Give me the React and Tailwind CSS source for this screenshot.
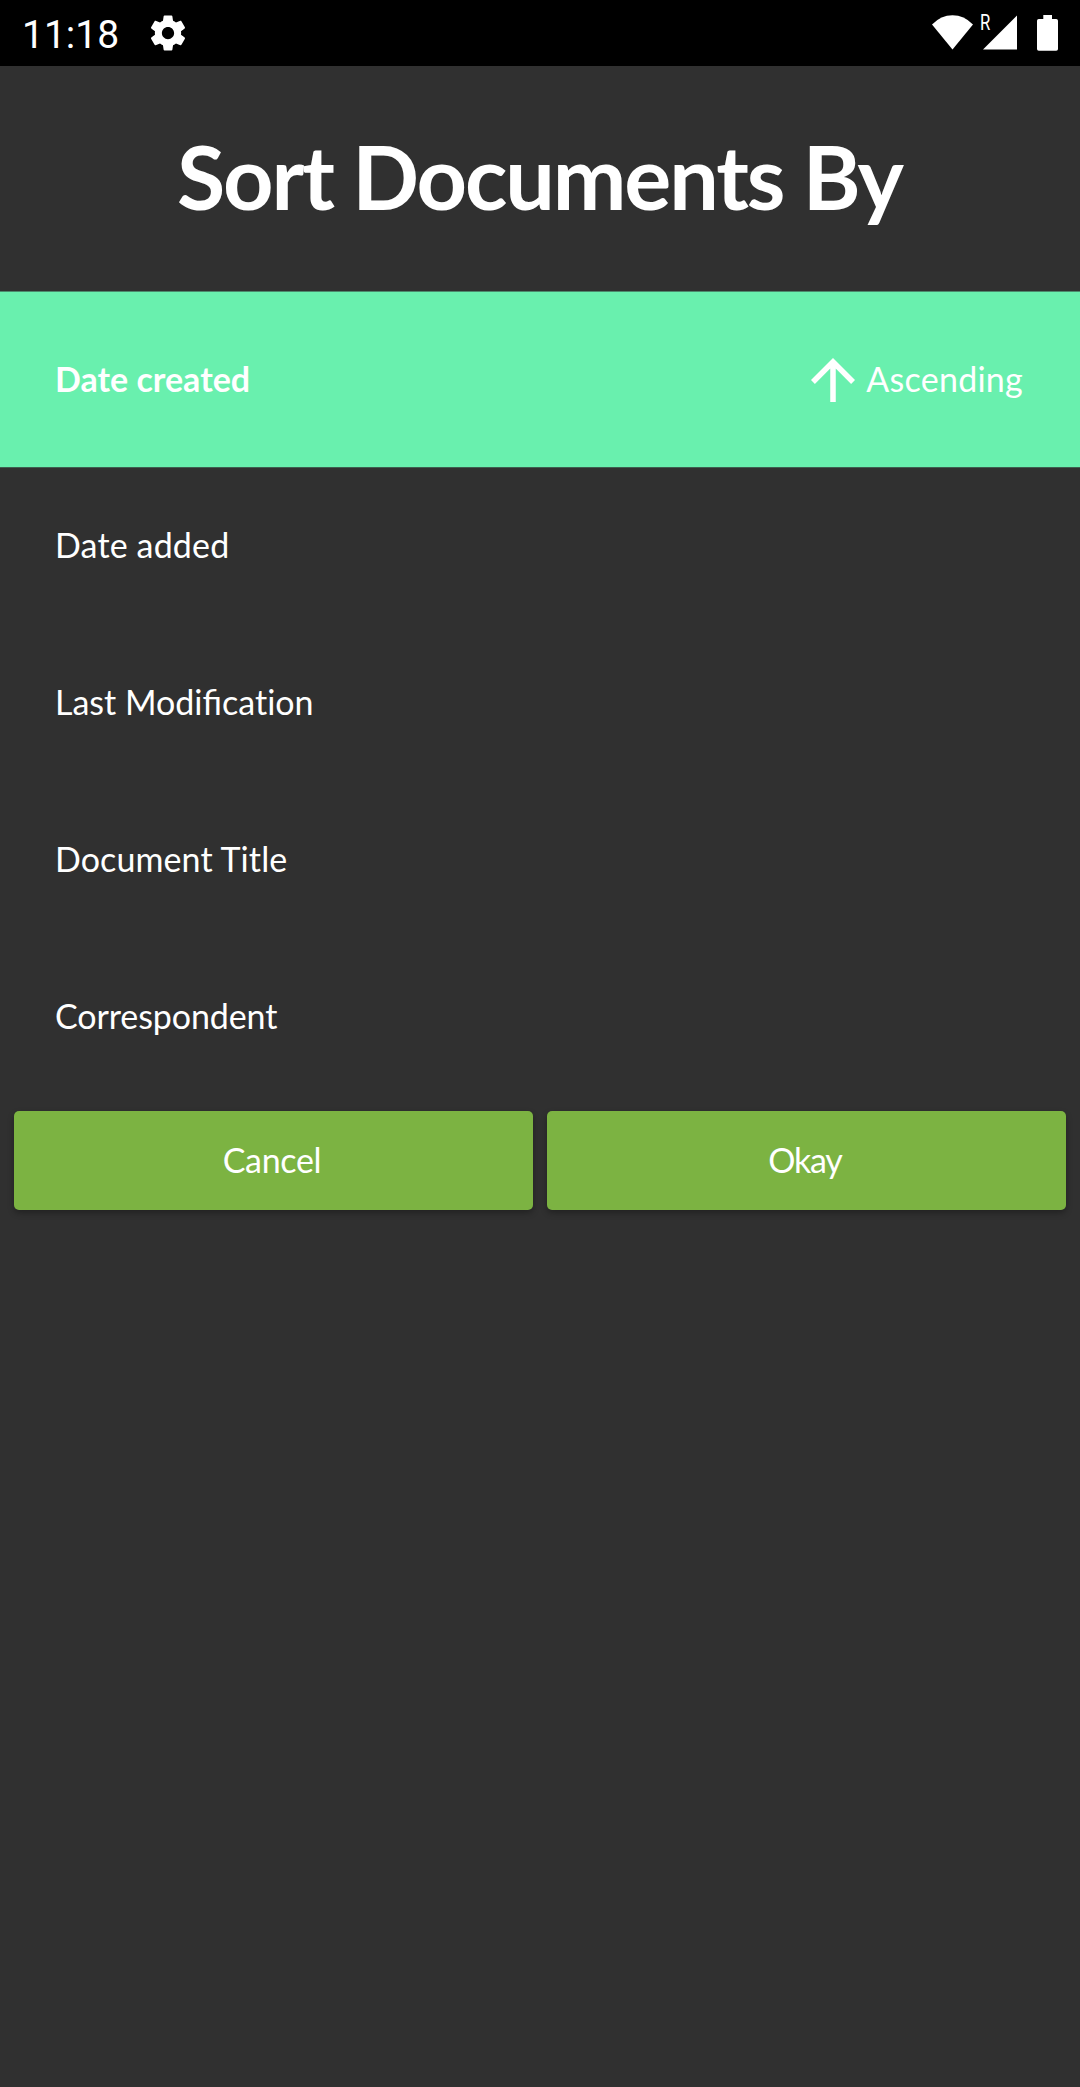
const options = [
  { id: "added", label: "Date added", tracking: "tracking-[0.15px]" },
  {
    id: "modified",
    label: (
      <>
        Last Modifica<span className="tracking-[-0.1px]">tion</span>
      </>
    ),
    tracking: "",
  },
  { id: "title", label: "Document Title", tracking: "tracking-[0.1px]" },
  { id: "correspondent", label: "Correspondent", tracking: "tracking-[-0.1px]" },
];

const BUTTON =
  "flex h-[99px] flex-1 items-center justify-center rounded-[5px] bg-[#7cb342] pr-[3px] pb-px shadow-[0_3px_6px_rgba(0,0,0,0.3)]";

function StatusBar() {
  return (
    <header className="flex h-[66px] items-center bg-black">
      <span className="ml-[22px] pt-[3px] font-[Roboto,sans-serif] text-[39px] leading-[46px]">11:18</span>
      <svg className="ml-[28px] size-[42px]" viewBox="0 0 24 24" fill="currentColor">
        <path d="M19.43 12.98c.04-.32.07-.64.07-.98s-.03-.66-.07-.98l2.11-1.65c.19-.15.24-.42.12-.64l-2-3.46c-.12-.22-.39-.3-.61-.22l-2.49 1c-.52-.4-1.08-.73-1.69-.98l-.38-2.65C14.46 2.18 14.25 2 14 2h-4c-.25 0-.46.18-.49.42l-.38 2.65c-.61.25-1.17.59-1.69.98l-2.49-1c-.23-.09-.49 0-.61.22l-2 3.46c-.13.22-.07.49.12.64l2.11 1.65c-.04.32-.07.65-.07.98s.03.66.07.98l-2.11 1.65c-.19.15-.24.42-.12.64l2 3.46c.12.22.39.3.61.22l2.49-1c.52.4 1.08.73 1.69.98l.38 2.65c.03.24.24.42.49.42h4c.25 0 .46-.18.49-.42l.38-2.65c.61-.25 1.17-.59 1.69-.98l2.49 1c.23.09.49 0 .61-.22l2-3.46c.12-.22.07-.49-.12-.64l-2.11-1.65zM12 15.5c-1.93 0-3.5-1.57-3.5-3.5s1.57-3.5 3.5-3.5 3.5 1.57 3.5 3.5-1.57 3.5-3.5 3.5z" />
      </svg>
      <div className="ml-auto flex items-start">
        <svg className="h-[35px] w-[41px]" viewBox="0 0 41 35" fill="currentColor">
          <path d="M0 9.5Q9 .3 20.5.3T41 9.5L20.5 34.5Z" />
        </svg>
        <span className="-mt-[3px] ml-[7px] w-[11px] origin-left scale-x-[0.76] font-[Roboto,sans-serif] text-[22px] leading-[22px]">R</span>
        <svg className="-ml-[8px] h-[35px] w-[34px]" viewBox="0 0 34 35" fill="currentColor">
          <path d="M34 .5V34.5H0Z" />
        </svg>
        <svg className="ml-[20px] mr-[22px] h-[36px] w-[21px]" viewBox="0 0 21 36" fill="currentColor">
          <path d="M6.3 0H15V4H19.2A1.8 1.8 0 0 1 21 5.8V34A1.8 1.8 0 0 1 19.2 35.8H1.8A1.8 1.8 0 0 1 0 34V5.8A1.8 1.8 0 0 1 1.8 4H6.3Z" />
        </svg>
      </div>
    </header>
  );
}

export default function App() {
  return (
    <div className="flex h-[2087px] w-[1080px] flex-col bg-[#303030] font-[Lato,sans-serif] text-[34px] leading-[40px] text-white">
      <StatusBar />
      <h1 className="flex h-[225px] items-center justify-center pr-px pb-[5px] text-[88px] leading-[104px] font-bold tracking-[-2.1px]">
        Sort Documents By
      </h1>
      <div className="flex h-[177px] items-center border-y border-t-[#4c8a6d] border-b-[#3d5f4f] bg-[#69f0ae] pr-[57px] pl-[55px]">
        <span className="pb-px font-bold">Date created</span>
        <svg className="ml-auto size-[66px]" viewBox="0 0 24 24" fill="currentColor">
          <path d="M4 12l1.41 1.41L11 7.83V20h2V7.83l5.58 5.59L20 12l-8-8-8 8z" />
        </svg>
        <span className="pb-px tracking-[0.25px]">Ascending</span>
      </div>
      {options.map(({ id, label, tracking }) => (
        <div key={id} className="flex h-[157px] items-center pb-[3px] pl-[55px]">
          <span className={tracking}>{label}</span>
        </div>
      ))}
      <div className="mt-[15px] flex gap-[14px] px-[14px]">
        <button className={BUTTON}>
          <span className="tracking-[-0.3px]">Cancel</span>
        </button>
        <button className={BUTTON}>
          <span className="tracking-[-1.2px]">Okay</span>
        </button>
      </div>
    </div>
  );
}
